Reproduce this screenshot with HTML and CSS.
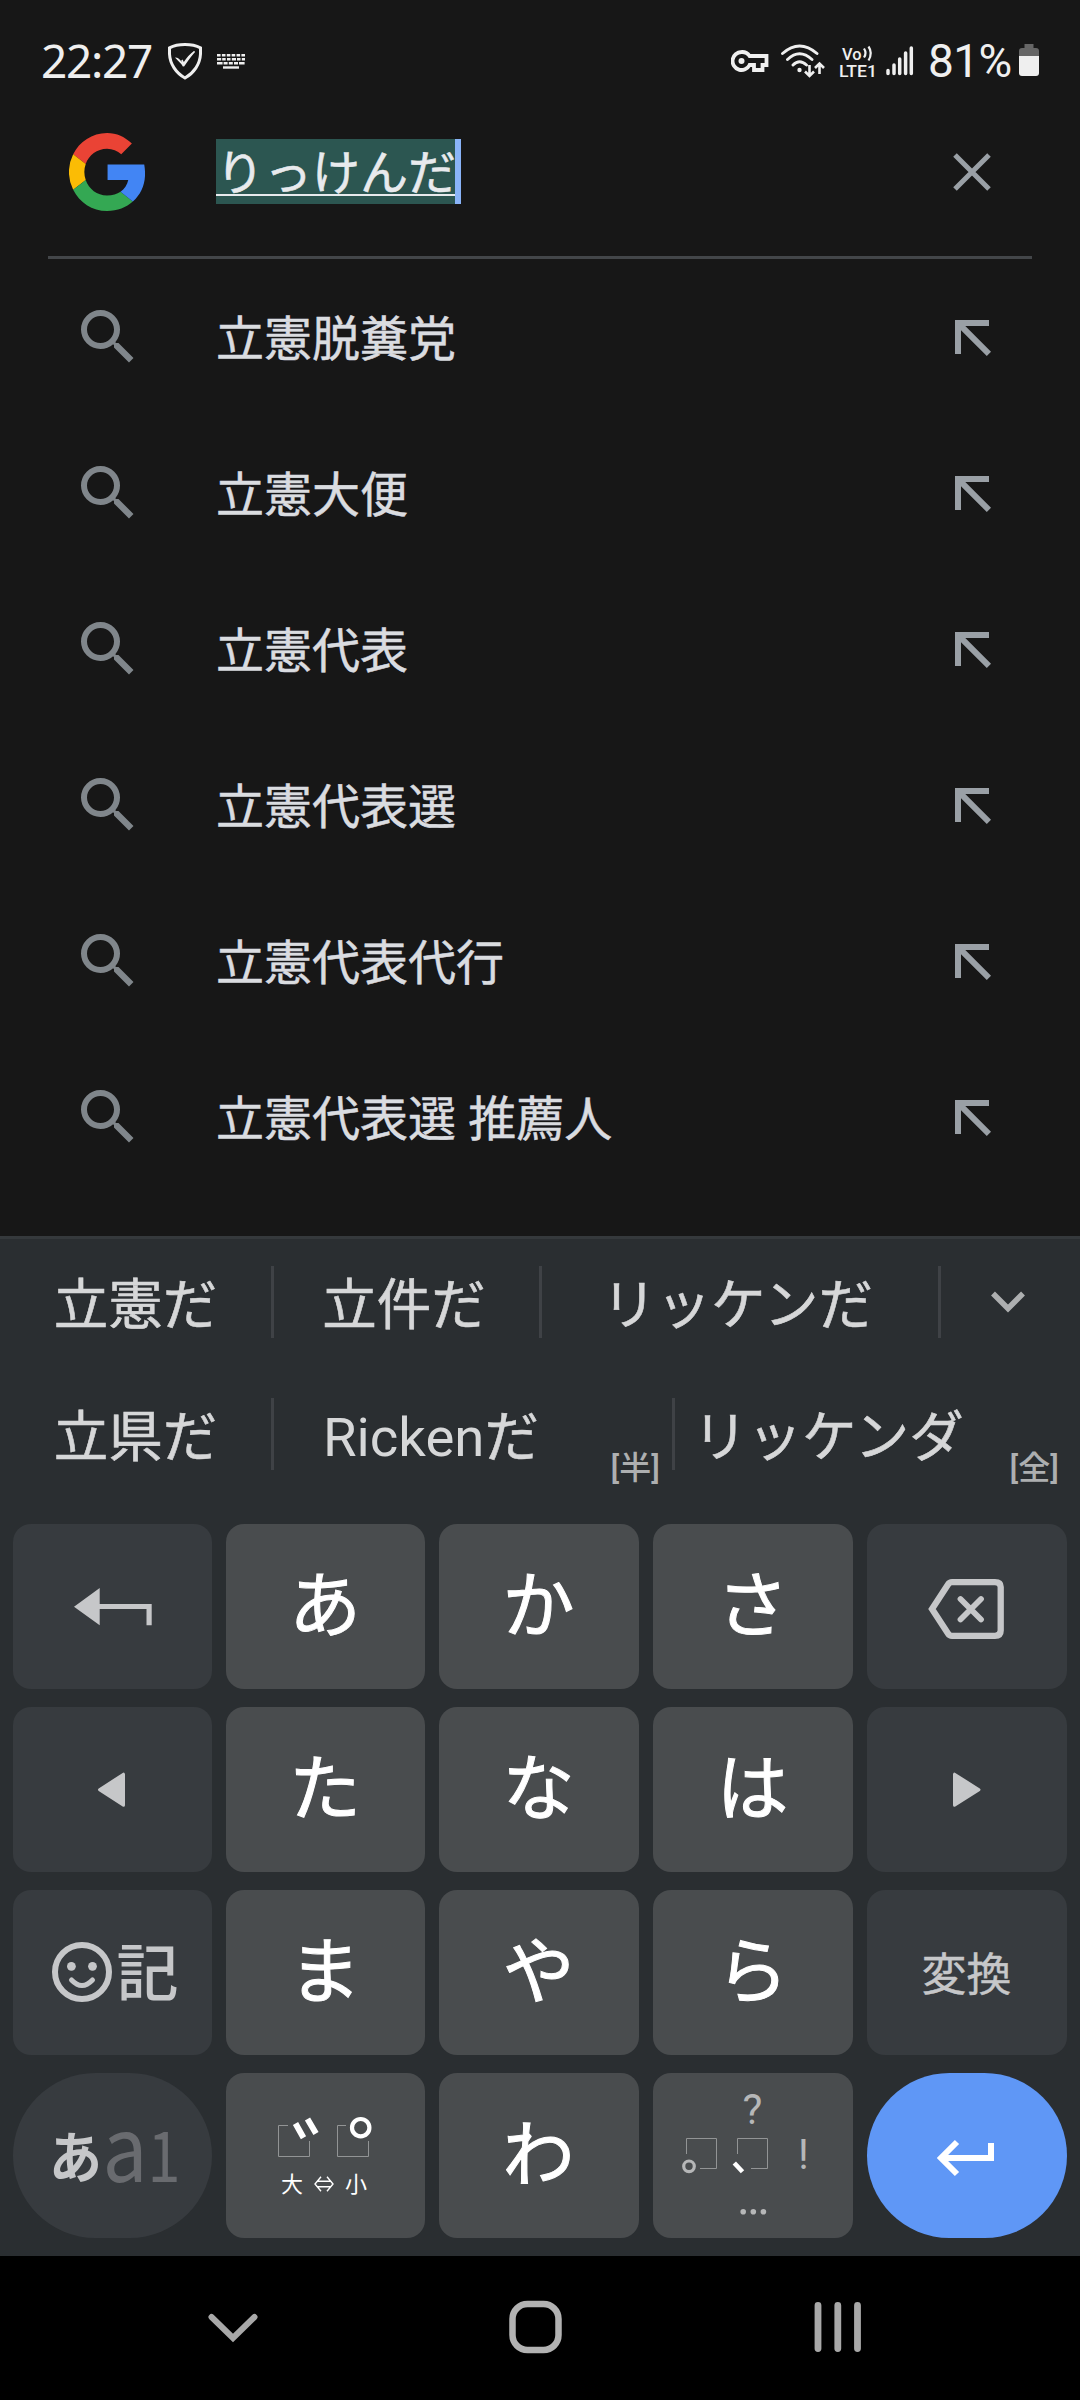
FILE: index.html
```html
<!DOCTYPE html>
<html lang="ja">
<head>
<meta charset="utf-8">
<title>検索</title>
<link rel="stylesheet" href="styles.css">
</head>
<body>
<svg class="defs" width="0" height="0">
  <symbol id="search" viewBox="0 0 24 24"><path d="M15.5 14h-.79l-.28-.27A6.471 6.471 0 0 0 16 9.5 6.5 6.5 0 1 0 9.5 16c1.61 0 3.09-.59 4.23-1.57l.27.28v.79l5 4.99L20.49 19l-4.99-5zm-6 0C7.01 14 5 11.99 5 9.5S7.01 5 9.5 5 14 7.01 14 9.5 11.99 14 9.5 14z"/></symbol>
  <symbol id="insert" viewBox="0 0 36 36"><path d="M0 0H34V6H10.3L36 31.8 31.8 36 6 10.3V34H0Z"/></symbol>
</svg>

<header class="status">
  <span class="clock">22:27</span>
  <svg class="shield" width="36" height="38" viewBox="0 0 36 38" fill="none" stroke="#efefef" stroke-width="3"><path d="M18 2.5C12 2.5 6 4 2.500 5.800V12C3 22 9 31 18 36C27 31 33 22 33.500 12V5.800C30 4 24 2.500 18 2.500Z"/><path d="M10 16.500C12 16.800 13.500 19 16.500 24L15 18L16.800 21.500C20 16 23 12.500 27.500 9.500C23 14.500 20 19 16.800 23.500Z" stroke-width="1.500" fill="#efefef"/></svg>
  <svg class="kbd" width="28" height="15" viewBox="0 0 28 15" fill="none" stroke="#efefef" stroke-width="2.400"><path d="M0 1.300H28" stroke-dasharray="3.600 1.280"/><path d="M0 5.300H28" stroke-dasharray="4.200 1.000 3.500 1.300 3.500 1.300"/><path d="M0 9.300H28" stroke-dasharray="5.600 1 4 1.200 4 1.200 4 1"/><path d="M6 13.500H22"/></svg>
  <div class="system">
    <svg class="key-icon" width="38" height="22" viewBox="0 0 38 22"><path d="M10.500 2A9 9 0 1 0 18.600 15H23V20H31.500V15H35.500V6H18.600A9 9 0 0 0 10.500 2Z" fill="none" stroke="#efefef" stroke-width="3.800"/><circle cx="10.500" cy="11" r="3" fill="#efefef"/></svg>
    <svg class="wifi" width="44" height="34" viewBox="0 0 44 34" fill="none" stroke="#efefef" stroke-width="2.900"><path d="M1.500 9.500Q18.500-5.500 36 9.500M6.500 15.500Q18.500 4 31 15.500M12 21Q18.500 14.500 25.500 21" stroke-linecap="round"/><circle cx="18.500" cy="26" r="2.200" fill="#efefef" stroke="none"/><path d="M28.500 21V31.500M24 27.500L28.500 32L33 27.500M38.500 30V20M34 24L38.500 19.500L43 24" stroke-width="2.600"/></svg>
    <svg class="volte" width="40" height="42" viewBox="0 -2 40 42"><text x="3" y="15.500" class="lte" textLength="19.500" lengthAdjust="spacingAndGlyphs">Vo</text><path d="M25 4.500Q28 9 25 13.500M29.500 2.500Q34 9 29.500 16.500" fill="none" stroke="#efefef" stroke-width="2.200"/><text x="0" y="32.700" class="lte" textLength="38" lengthAdjust="spacingAndGlyphs">LTE1</text></svg>
    <svg class="signal" width="28" height="30" viewBox="0 0 28 30" stroke="#efefef" stroke-width="3.500" stroke-linecap="round"><path d="M2 24.500V27.500M8 19V27.500M13.700 13V27.500M19.600 7V27.500M25.300 2V27.500"/></svg>
    <span class="percent">81%</span>
    <svg class="battery" width="20" height="33" viewBox="0 0 20 33"><path d="M5.500 0H14.500V4H17Q20 4 20 7V12H0V7Q0 4 3 4H5.500Z" fill="#666"/><path d="M0 12H20V29Q20 32 17 32H3Q0 32 0 29Z" fill="#efefef"/></svg>
  </div>
</header>

<section class="searchbar">
  <svg class="google" width="76" height="78" viewBox="4 4 40 40.700" preserveAspectRatio="none"><path fill="#ea4335" d="M24 12.200c2.900 0 5.500 1.100 7.500 2.900l5.600-5.600C33.500 6.100 29.100 4 24 4 16.200 4 9.500 8.500 6.200 15.100l6.600 5.100C14.400 15.500 18.800 12.200 24 12.200Z"/><path fill="#fbbc05" d="M12.800 28.500A12.500 12.500 0 0 1 12.800 20.200L6.200 15.100A20.300 20.300 0 0 0 6.200 33.600Z"/><path fill="#34a853" d="M24 44.700c5.500 0 10.200-1.800 13.600-4.900l-6.500-5.100c-1.800 1.200-4.200 1.900-7.100 1.900-5.200 0-9.600-3.400-11.200-8.100l-6.600 5.100C9.500 40.200 16.200 44.700 24 44.700Z"/><path fill="#4285f4" d="M24.300 20.500H43.600C45 28.500 43 35 37.600 39.800L31.100 34.700C33.200 33.300 34.600 31.100 35.200 28.500H24.300Z"/></svg>
  <div class="field"><span class="query">りっけんだ</span></div>
  <svg class="clear" width="38" height="38" viewBox="0 0 38 38"><path d="M2 2L36 36M36 2L2 36" stroke="#9aa0a6" stroke-width="5"/></svg>
</section>

<main class="suggestions">
  <div class="row"><svg class="glass"><use href="#search"/></svg><span class="label">立憲脱糞党</span><svg class="fill"><use href="#insert"/></svg></div>
  <div class="row"><svg class="glass"><use href="#search"/></svg><span class="label">立憲大便</span><svg class="fill"><use href="#insert"/></svg></div>
  <div class="row"><svg class="glass"><use href="#search"/></svg><span class="label">立憲代表</span><svg class="fill"><use href="#insert"/></svg></div>
  <div class="row"><svg class="glass"><use href="#search"/></svg><span class="label">立憲代表選</span><svg class="fill"><use href="#insert"/></svg></div>
  <div class="row"><svg class="glass"><use href="#search"/></svg><span class="label">立憲代表代行</span><svg class="fill"><use href="#insert"/></svg></div>
  <div class="row"><svg class="glass"><use href="#search"/></svg><span class="label">立憲代表選 推薦人</span><svg class="fill"><use href="#insert"/></svg></div>
</main>

<section class="keyboard">
  <div class="candidates first">
    <span class="cand">立憲だ</span><i class="sep"></i>
    <span class="cand">立件だ</span><i class="sep"></i>
    <span class="cand">リッケンだ</span><i class="sep"></i>
    <span class="more"><svg width="34" height="22" viewBox="0 0 34 22"><path d="M2 2.500L17 17.500L32 2.500" fill="none" stroke="#adafb0" stroke-width="5.500"/></svg></span>
  </div>
  <div class="candidates second">
    <span class="cand">立県だ</span><i class="sep"></i>
    <span class="cand"><span class="latin">Ricken</span>だ<small>[半]</small></span><i class="sep"></i>
    <span class="cand">リッケンダ<small>[全]</small></span>
  </div>
  <div class="keys">
    <div class="key fn"><svg viewBox="0 0 200 165" fill="#c6c7c9"><path d="M61 82.700L86.700 64V80H138.700V101.300H133.500V85H86.700V101.300Z"/></svg></div>
    <div class="key">あ</div><div class="key">か</div><div class="key">さ</div>
    <div class="key fn"><svg viewBox="0 0 200 165" fill="none" stroke="#c6c7c9" stroke-width="6.300"><path d="M65 85L81 60.500Q82.500 58.200 85 58.200H128Q133.700 58.200 133.700 63V106.500Q133.700 111.800 128 111.800H85Q82.500 111.800 81 109.500Z"/><path d="M93.500 75L114 95.500M114 75L93.500 95.500" stroke-linecap="round" stroke-width="5.800"/></svg></div>

    <div class="key fn"><svg viewBox="0 0 200 165" fill="#c6c7c9" stroke="#c6c7c9" stroke-width="3" stroke-linejoin="round"><path d="M86.500 82.700L110.500 67.200V98.200Z"/></svg></div>
    <div class="key">た</div><div class="key">な</div><div class="key">は</div>
    <div class="key fn"><svg viewBox="0 0 200 165" fill="#c6c7c9" stroke="#c6c7c9" stroke-width="3" stroke-linejoin="round"><path d="M112 82.700L87.500 67.200V98.200Z"/></svg></div>

    <div class="key fn"><svg viewBox="0 0 200 165"><circle cx="69" cy="82" r="27" fill="none" stroke="#c6c7c9" stroke-width="6"/><circle cx="58.400" cy="76.300" r="4.400" fill="#c6c7c9"/><circle cx="79.500" cy="76.300" r="4.400" fill="#c6c7c9"/><path d="M58.500 90Q69 101 79.500 90" fill="none" stroke="#c6c7c9" stroke-width="5" stroke-linecap="round"/><text class="sym" x="103.500" y="106">記</text></svg></div>
    <div class="key">ま</div><div class="key">や</div><div class="key">ら</div>
    <div class="key fn henkan">変換</div>

    <div class="key fn pill"><svg viewBox="0 0 200 165"><text class="mode-kana" x="36" y="105" textLength="53" lengthAdjust="spacingAndGlyphs">あ</text><text class="mode-a" x="89.500" y="109" textLength="45" lengthAdjust="spacingAndGlyphs">a</text><text class="mode-1" x="134.500" y="109" textLength="33" lengthAdjust="spacingAndGlyphs">1</text></svg></div>
    <div class="key"><svg viewBox="0 0 200 165" fill="none" stroke="#929495"><path d="M62 52.500H52.500V83.500H83.500V68M120 52.500H111.500V83.500H142.500V68"/><path d="M69.500 50.500L77.500 64.800M81.500 46L90 60.500" stroke="#fff" stroke-width="6"/><circle cx="134.700" cy="54.700" r="8.700" stroke="#fff" stroke-width="4.200"/><text class="size" x="55" y="119">大</text><text class="size" x="119" y="119">小</text><path d="M91 108.300H105M91 113.700H105M95 103.800L89 111L95 118.200M101 103.800L107 111L101 118.200" stroke="#fff" stroke-width="1.400"/></svg></div>
    <div class="key">わ</div>
    <div class="key"><svg viewBox="0 0 200 165" fill="none" stroke="#929495"><path d="M33.500 81V65.500H63.500V95.500H47M84.500 81V65.500H114.500V95.500H98"/><circle cx="36" cy="93.300" r="5.300" stroke="#b6b7b8" stroke-width="3.200"/><path d="M81.300 90L89.500 98.800" stroke="#fff" stroke-width="4.600"/><text class="punct" x="99.500" y="51">?</text><text class="punct" x="150.300" y="96">!</text><g stroke="none" fill="#b6b7b8"><circle cx="90.200" cy="138.700" r="2.800"/><circle cx="100.300" cy="138.700" r="2.800"/><circle cx="110.400" cy="138.700" r="2.800"/></g></svg></div>
    <div class="key pill enter"><svg viewBox="0 0 200 165" fill="none" stroke="#fff" stroke-width="6"><path d="M124 70V85H75M90 69L74 85L90 101"/></svg></div>
  </div>
</section>

<nav class="navbar">
  <svg width="50" height="32" viewBox="0 0 50 32"><path d="M3.500 6L25 27L46.500 6" fill="none" stroke="#a8a8a8" stroke-width="6" stroke-linecap="round"/></svg>
  <svg width="54" height="54" viewBox="0 0 54 54"><rect x="3.500" y="4" width="46" height="46" rx="15" fill="none" stroke="#b2b2b2" stroke-width="6.500"/></svg>
  <svg width="48" height="50" viewBox="0 0 48 50"><path d="M4 3.500V46.500M23.800 3.500V46.500M43.500 3.500V46.500" stroke="#a8a8a8" stroke-width="6.800" stroke-linecap="round"/></svg>
</nav>
</body>
</html>
```

FILE: styles.css
```css
* { box-sizing: border-box; }
body {
  margin: 0;
  width: 1080px;
  height: 2400px;
  overflow: hidden;
  background: #171717;
  color: #dadce0;
  font-family: "Noto Sans CJK JP", sans-serif;
  display: flex;
  flex-direction: column;
}
svg { display: block; flex: none; }
.defs { height: 0; width: 0; position: absolute; }

.status {
  height: 121px;
  display: flex;
  align-items: center;
  padding: 0 41px 0 41px;
  color: #efefef;
}
.clock { font: 46px/60px "Noto Sans", sans-serif; width: 126px; letter-spacing: -1.3px; margin-top: -2px; }
.kbd { margin: 2px 0 0 14px; }
.system { margin-left: auto; display: flex; align-items: center; }
.wifi { margin-left: 12px; }
.volte { margin: 4px 0 0 14px; }
.lte { font: 500 17px Roboto, sans-serif; fill: #efefef; }
.signal { margin-left: 7px; }
.percent { font: 46px/60px Roboto, sans-serif; margin-left: 14px; width: 86px; letter-spacing: -.6px; margin-top: 1px; }
.battery { margin-left: 5px; }

.searchbar {
  height: 138px;
  margin: 0 48px;
  border-bottom: 3px solid #434649;
  display: flex;
  align-items: center;
  padding: 0 41px 0 21px;
}
.google { margin-top: -33px; }
.field { margin: -35px auto 0 71px; display: flex; color: #e8eaed; font-size: 48px; -webkit-text-stroke: .6px; }
.query {
  height: 65px;
  line-height: 60px;
  white-space: nowrap;
  background: linear-gradient(#e8eaed, #e8eaed) 0 55px / 100% 2px no-repeat #2c5651;
  border-right: 6px solid #8ab4f8;
  width: 245px;
}
.clear { margin-top: -33px; }

.suggestions { height: 977px; }
.row { height: 156px; display: flex; align-items: center; padding: 0 89px 0 72px; }
.glass { width: 72px; height: 72px; fill: #80868b; }
.label { margin: -5px 0 0 72px; font-size: 48px; line-height: 72px; flex: 1; word-spacing: 1.5px; -webkit-text-stroke: .5px; }
.fill { width: 36px; height: 36px; fill: #9aa0a6; margin-top: 2px; }

.keyboard { height: 1020px; background: #2a2e31; border-top: 3px solid #35393c; }
.candidates { display: grid; align-items: center; font-size: 54.5px; color: #d6d7d8; -webkit-text-stroke: .6px; }
.candidates.first { height: 126px; grid-template-columns: 271px 3px 265px 3px 396px 3px 1fr; }
.candidates.second { height: 138px; grid-template-columns: 271px 3px 398px 3px 1fr; }
.cand { line-height: 70px; text-align: center; height: 72px; white-space: nowrap; position: relative; }
.first .cand:nth-of-type(2) { padding-right: 5px; }
.first .cand:nth-of-type(3) { padding-right: 5px; }
.second .cand:not(:first-child) { text-align: left; padding-left: 49px; }
.second .cand:last-child { padding-left: 18px; }
.latin { font-family: Roboto, sans-serif; -webkit-text-stroke: 0; }
.sep { width: 3px; height: 72px; background: #3f4246; }
.more { justify-self: center; padding-right: 6px; }
small { position: absolute; right: 12px; bottom: -20px; font: 500 32px/44px Roboto, "Noto Sans CJK JP", sans-serif; color: #adafb0; -webkit-text-stroke: 0; }
.cand:last-child small { right: 21px; }

.keys {
  margin-top: 21px;
  padding: 0 13px;
  display: grid;
  grid-template-columns: 199px 199px 200px 200px 200px;
  grid-auto-rows: 165px;
  gap: 18px 14px;
}
.key {
  background: #494c4e;
  border-radius: 18px;
  color: #fff;
  font-size: 72px;
  font-weight: 400;
  -webkit-text-stroke: 1px;
  line-height: 151px;
  text-align: center;
  padding-right: 1px;
  min-width: 0;
}
.key:has(svg) { padding: 0; line-height: 0; }
.key svg { width: 200px; height: 165px; -webkit-text-stroke: 0; }
.fn { background: #373b3f; color: #c6c7c9; }
.pill { border-radius: 82.5px; }
.enter { background: #5f97f6; }
.henkan { font-size: 45px; font-weight: 400; line-height: 164px; -webkit-text-stroke: .4px; }
.sym { font-size: 62px; font-weight: 500; fill: #c6c7c9; }
.mode-kana { font-size: 56px; font-weight: 700; fill: #c6c7c9; }
.mode-a { font-size: 90px; font-weight: 400; fill: #696b6f; }
.mode-1 { font-size: 68px; font-weight: 400; fill: #696b6f; }
.size { font-size: 22px; font-weight: 400; fill: #fff; stroke: none; }
.punct { font: 42px Roboto, sans-serif; fill: #b6b7b8; stroke: none; text-anchor: middle; }

.navbar {
  height: 144px;
  background: #000;
  display: flex;
  align-items: center;
  justify-content: space-between;
  padding: 0 218px 2px 208px;
}
```
